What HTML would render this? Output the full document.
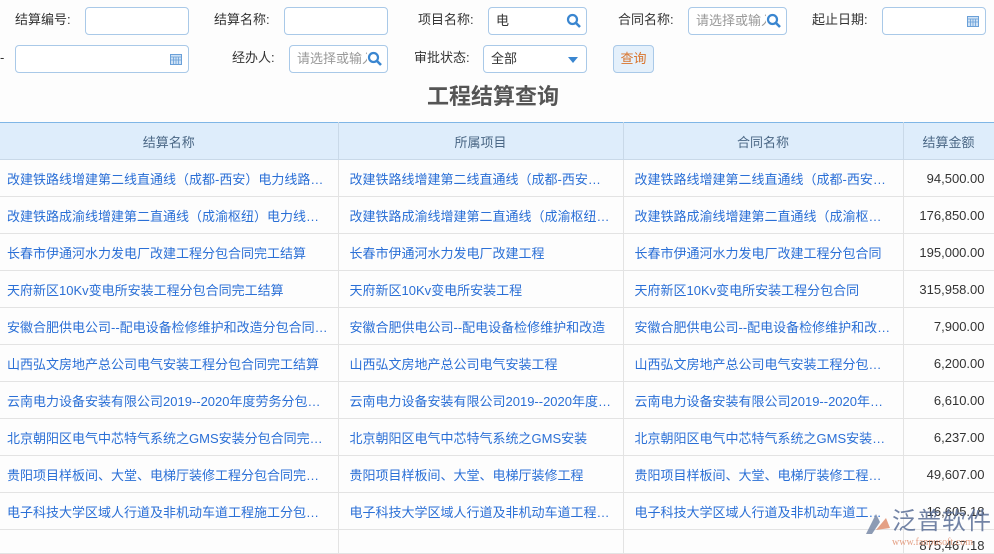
<!DOCTYPE html>
<html><head><meta charset="utf-8"><style>
*{box-sizing:border-box;margin:0;padding:0}
body{width:994px;height:553px;overflow:hidden;background:#fdfdfd;font-family:"Liberation Sans","Noto Sans CJK SC",sans-serif;font-size:13px;color:#333;position:relative}
.a{position:absolute}
.lbl{position:absolute;font-size:13px;color:#333;line-height:16px}
.inp{position:absolute;height:28px;border:1px solid #a9c9e8;border-radius:4px;background:#fff;font-size:13px;line-height:26px;padding-left:7px;color:#333}
.ph{color:#999}
.ic{position:absolute;right:4px;top:5px}
h1{position:absolute;left:0;width:986px;top:83px;text-align:center;font-size:22px;font-weight:bold;color:#555;line-height:28px}
table{position:absolute;left:0;top:122px;border-collapse:collapse;width:994px;table-layout:fixed}
th{height:37px;background:#deedfb;color:#4a6785;font-weight:normal;font-size:13px;border-top:1px solid #7fb6e6;border-bottom:1px solid #c9d9e8;border-right:1px solid #c9d9e8}
td{height:37px;border-bottom:1px solid #e3e3e3;border-right:1px solid #e3e3e3;color:#2a6fd6;padding-left:11px;white-space:nowrap;overflow:hidden;font-size:13px}
td:first-child{padding-left:7px}
td.n{color:#333;text-align:right;padding-right:9px}
tr.t td{height:24px}
</style></head><body>
<div class="lbl" style="left:15px;top:12px">结算编号:</div>
<div class="inp" style="left:85px;top:7px;width:104px"></div>
<div class="lbl" style="left:214px;top:12px">结算名称:</div>
<div class="inp" style="left:284px;top:7px;width:104px"></div>
<div class="lbl" style="left:418px;top:12px">项目名称:</div>
<div class="inp" style="left:488px;top:7px;width:99px">电<svg class="ic" width="16" height="16" viewBox="0 0 16 16"><circle cx="6.5" cy="6.5" r="4.5" fill="none" stroke="#3a86d0" stroke-width="2.2"/><path d="M10 10l4 4" stroke="#3a86d0" stroke-width="2.6"/></svg></div>
<div class="lbl" style="left:618px;top:12px">合同名称:</div>
<div class="inp" style="left:688px;top:7px;width:99px"><span class="ph">请选择或输入</span><svg class="ic" width="16" height="16" viewBox="0 0 16 16" style="background:#fff"><circle cx="6.5" cy="6.5" r="4.5" fill="none" stroke="#3a86d0" stroke-width="2.2"/><path d="M10 10l4 4" stroke="#3a86d0" stroke-width="2.6"/></svg></div>
<div class="lbl" style="left:812px;top:12px">起止日期:</div>
<div class="inp" style="left:882px;top:7px;width:104px"><svg class="ic" style="top:7px;right:6px" width="12" height="12" viewBox="0 0 12 12"><rect x="0.5" y="1.5" width="11" height="10" fill="#cfe2f6" stroke="#6aa0d8"/><path d="M0.5 4h11M3.5 4v7M6 4v7M8.5 4v7M0.5 7h11" stroke="#6aa0d8" stroke-width="0.8"/></svg></div>
<div class="lbl" style="left:0;top:50px">-</div>
<div class="inp" style="left:15px;top:45px;width:174px"><svg class="ic" style="top:7px;right:6px" width="12" height="12" viewBox="0 0 12 12"><rect x="0.5" y="1.5" width="11" height="10" fill="#cfe2f6" stroke="#6aa0d8"/><path d="M0.5 4h11M3.5 4v7M6 4v7M8.5 4v7M0.5 7h11" stroke="#6aa0d8" stroke-width="0.8"/></svg></div>
<div class="lbl" style="left:232px;top:50px">经办人:</div>
<div class="inp" style="left:289px;top:45px;width:99px"><span class="ph">请选择或输入</span><svg class="ic" width="16" height="16" viewBox="0 0 16 16" style="background:#fff"><circle cx="6.5" cy="6.5" r="4.5" fill="none" stroke="#3a86d0" stroke-width="2.2"/><path d="M10 10l4 4" stroke="#3a86d0" stroke-width="2.6"/></svg></div>
<div class="lbl" style="left:414px;top:50px">审批状态:</div>
<div class="inp" style="left:483px;top:45px;width:104px">全部<svg class="ic" style="top:11px;right:8px" width="10" height="6" viewBox="0 0 10 6"><path d="M0 0h10L5 6z" fill="#3a86d0"/></svg></div>
<div class="inp" style="left:613px;top:45px;width:41px;background:#e4f0fb;color:#d9742c;text-align:center;padding:0">查询</div>
<h1>工程结算查询</h1>
<table>
<colgroup><col style="width:338px"><col style="width:285px"><col style="width:280px"><col style="width:91px"></colgroup>
<tr><th>结算名称</th><th>所属项目</th><th>合同名称</th><th>结算金额</th></tr>
<tr><td>改建铁路线增建第二线直通线（成都-西安）电力线路…</td><td>改建铁路线增建第二线直通线（成都-西安…</td><td>改建铁路线增建第二线直通线（成都-西安…</td><td class="n">94,500.00</td></tr>
<tr><td>改建铁路成渝线增建第二直通线（成渝枢纽）电力线…</td><td>改建铁路成渝线增建第二直通线（成渝枢纽…</td><td>改建铁路成渝线增建第二直通线（成渝枢…</td><td class="n">176,850.00</td></tr>
<tr><td>长春市伊通河水力发电厂改建工程分包合同完工结算</td><td>长春市伊通河水力发电厂改建工程</td><td>长春市伊通河水力发电厂改建工程分包合同</td><td class="n">195,000.00</td></tr>
<tr><td>天府新区10Kv变电所安装工程分包合同完工结算</td><td>天府新区10Kv变电所安装工程</td><td>天府新区10Kv变电所安装工程分包合同</td><td class="n">315,958.00</td></tr>
<tr><td>安徽合肥供电公司--配电设备检修维护和改造分包合同…</td><td>安徽合肥供电公司--配电设备检修维护和改造</td><td>安徽合肥供电公司--配电设备检修维护和改…</td><td class="n">7,900.00</td></tr>
<tr><td>山西弘文房地产总公司电气安装工程分包合同完工结算</td><td>山西弘文房地产总公司电气安装工程</td><td>山西弘文房地产总公司电气安装工程分包…</td><td class="n">6,200.00</td></tr>
<tr><td>云南电力设备安装有限公司2019--2020年度劳务分包…</td><td>云南电力设备安装有限公司2019--2020年度…</td><td>云南电力设备安装有限公司2019--2020年…</td><td class="n">6,610.00</td></tr>
<tr><td>北京朝阳区电气中芯特气系统之GMS安装分包合同完…</td><td>北京朝阳区电气中芯特气系统之GMS安装</td><td>北京朝阳区电气中芯特气系统之GMS安装…</td><td class="n">6,237.00</td></tr>
<tr><td>贵阳项目样板间、大堂、电梯厅装修工程分包合同完…</td><td>贵阳项目样板间、大堂、电梯厅装修工程</td><td>贵阳项目样板间、大堂、电梯厅装修工程…</td><td class="n">49,607.00</td></tr>
<tr><td>电子科技大学区域人行道及非机动车道工程施工分包…</td><td>电子科技大学区域人行道及非机动车道工程…</td><td>电子科技大学区域人行道及非机动车道工…</td><td class="n">16,605.18</td></tr>
<tr class="t"><td></td><td></td><td></td><td class="n" style="vertical-align:bottom">875,467.18</td></tr>
</table>
<div class="a" style="left:862px;top:506px;width:130px;height:47px;opacity:.85">
<svg class="a" style="left:0;top:4px" width="30" height="28" viewBox="0 0 30 28"><path d="M4 24L14 4l4 8-8 12z" fill="#7a8aa8"/><path d="M14 20l10-12 4 10z" fill="#e09070"/></svg>
<div class="a" style="left:30px;top:1px;font-size:24px;color:#5a6e96;letter-spacing:1px;line-height:30px">泛普软件</div>
<div class="a" style="left:30px;top:31px;font-size:10px;color:#e09070;font-family:'Liberation Serif',serif">www.fanpusoft.com</div>
</div>
</body></html>
